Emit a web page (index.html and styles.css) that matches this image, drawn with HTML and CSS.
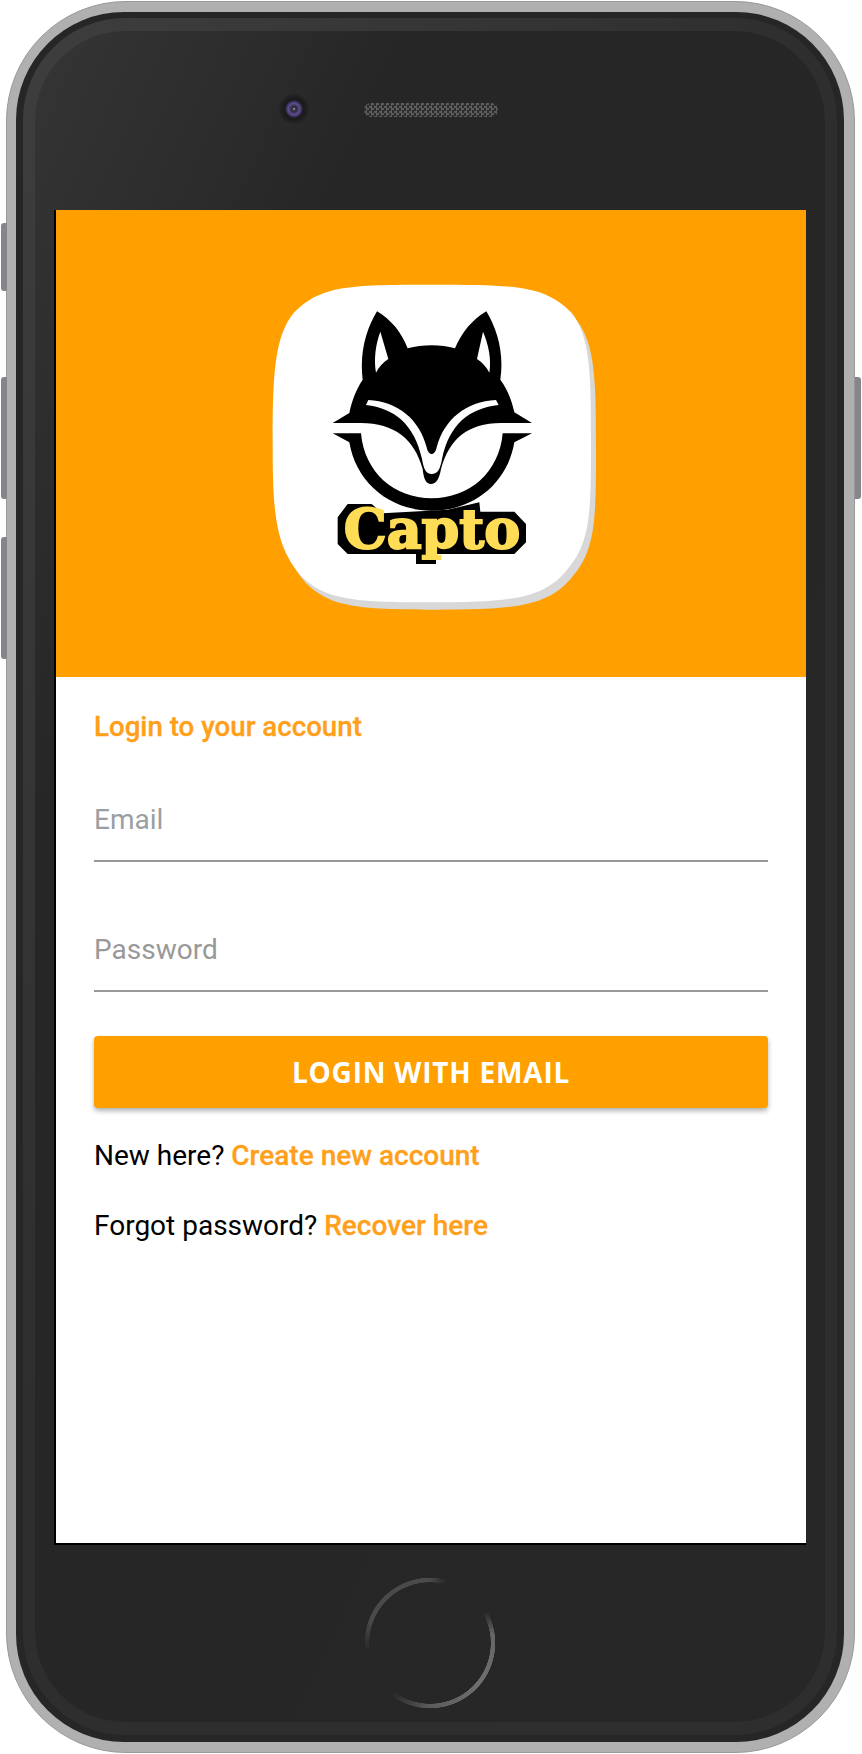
FILE: index.html
```html
<!DOCTYPE html>
<html lang="en">
<head>
  <meta charset="UTF-8">
  <title>Capto login</title>
  <link rel="stylesheet" href="styles.css">
</head>

<body>
<div class="phone">
  <div class="side-btn btn-mute"></div>
  <div class="side-btn btn-vol-up"></div>
  <div class="side-btn btn-vol-down"></div>
  <div class="side-btn btn-power"></div>

  <div class="rim">
    <div class="bezel">
      <div class="face">

        <div class="face-top">
          <div class="camera"></div>
          <div class="speaker"></div>
        </div>

        <div class="screen">
          <div class="banner">
            <svg class="logo" viewBox="0 0 1080 1050" width="360" height="350">
              <!-- app icon tile -->
              <path class="tile-shadow" transform="translate(15 22)" d="M540 47C800 47 880 50 960 130C1020 200 1020 330 1020 520C1020 720 1020 820 950 900C880 990 780 1000 540 1000C300 1000 220 990 150 920C70 830 65 720 65 520C65 320 70 200 130 130C210 50 290 47 540 47Z"/>
              <path class="tile" d="M540 47C800 47 880 50 960 130C1020 200 1020 330 1020 520C1020 720 1020 820 950 900C880 990 780 1000 540 1000C300 1000 220 990 150 920C70 830 65 720 65 520C65 320 70 200 130 130C210 50 290 47 540 47Z"/>

              <!-- fox head -->
              <path class="ink" d="M378 127C420 152 452 190 470 238C515 226 570 226 612 238C632 190 664 152 706 127C738 180 760 250 748 332C770 362 782 395 790 430L843 462L750 462C650 462 595 510 570 600C565 630 555 645 540 645C525 645 518 630 515 600C490 510 430 462 330 462L245 462L295 432C303 395 315 362 335 332C325 250 346 180 378 127Z"/>
              <path class="tile" d="M388 188L412 270C396 280 384 294 375 311C368 270 374 225 388 188Z"/>
              <path class="tile" d="M696 188L678 270C694 280 706 294 715 311C722 270 712 225 696 188Z"/>
              <path class="tile" d="M352 393C440 398 505 450 527 535C532 562 552 562 557 535C580 450 645 398 735 393L743 408C655 418 595 465 573 570C568 600 560 615 542 615C525 615 518 600 513 570C490 465 430 418 345 408Z"/>
              <!-- lower ring -->
              <path class="ink" d="M245 493L330 493C340 610 430 688 542 688C655 688 745 610 755 493L843 493L790 520C770 640 670 725 542 725C415 725 315 640 295 520Z"/>

              <!-- wordmark -->
              <path class="ink" d="M260 745L290 705L362 705L395 733L590 722L685 700L688 728L790 728L825 765L825 820L790 855L555 855L555 885L495 885L495 855L290 855L260 825Z"/>
              <text class="wordmark" x="278" y="836" textLength="530" lengthAdjust="spacingAndGlyphs">Capto</text>
            </svg>
          </div>

          <form class="login">
            <h2 class="login-title">Login to your account</h2>
            <div class="field first"><input class="email" type="text" placeholder="Email"></div>
            <div class="field"><input type="password" placeholder="Password"></div>
            <button class="btn-login" type="button">LOGIN WITH EMAIL</button>
            <p class="hint">New here? <a href="#">Create new account</a></p>
            <p class="hint">Forgot password? <a href="#">Recover here</a></p>
          </form>
        </div>

        <div class="face-bottom">
          <div class="home"></div>
        </div>

      </div>
    </div>
  </div>
</div>
</body>
</html>
```

FILE: styles.css
```css
html, body {
  margin: 0;
  padding: 0;
  background: #fff;
  overflow: hidden;
}

/* phone shell */
.phone {
  position: relative;
  box-sizing: border-box;
  width: 849px;
  height: 1752px;
  margin: 1px 0 0 6px;
  padding: 10px 10px 10px 9px;
  border: 1px solid #999;
  border-radius: 120px;
  background: #b0b0b0;
}

.rim {
  height: 100%;
  box-sizing: border-box;
  padding: 6px 7px 7px 7px;
  border-radius: 108px;
  background: #262626;
}

.bezel {
  height: 100%;
  box-sizing: border-box;
  padding: 13px 12px;
  border-radius: 102px;
  background: linear-gradient(120deg, #3e3e3e 0, #2e2e2e 45%, #2e2e2e 100%);
}

.face {
  height: 100%;
  border-radius: 90px;
  background: linear-gradient(115deg, #353535 0, #262626 24%, #272727 100%);
}

.side-btn {
  position: absolute;
  width: 6px;
  background: #85858c;
  border-radius: 3px 0 0 3px;
}

.btn-mute { left: -6px; top: 221px; height: 68px; }
.btn-vol-up { left: -6px; top: 375px; height: 122px; }
.btn-vol-down { left: -6px; top: 535px; height: 122px; }

.btn-power {
  right: -7px;
  top: 375px;
  height: 122px;
  border-radius: 0 3px 3px 0;
}

/* top of the phone */
.face-top {
  box-sizing: border-box;
  height: 179px;
  padding: 63px 0 0 244px;
  display: flex;
  align-items: flex-start;
  gap: 55px;
}

.camera {
  flex: none;
  width: 30px;
  height: 30px;
  border-radius: 50%;
  background: radial-gradient(circle at 50% 50%, #c0bcc8 0, #3a3548 1.5px, #332e40 3px, #5d4e8f 5.5px, #3d3360 7.5px, #1a1a1c 9px, #1c1c1c 11px, #262626 15px);
}

.speaker {
  flex: none;
  width: 134px;
  height: 14px;
  margin-top: 9px;
  border-radius: 7px;
  background: repeating-conic-gradient(#5c5c5c 0 25%, #2c2c2c 0 50%) 0 0 / 5px 5px;
}

/* screen */
.screen {
  box-sizing: border-box;
  width: 752px;
  height: 1335px;
  margin-left: 19px;
  border-left: 2px solid #000;
  border-bottom: 2px solid #000;
  background: #fff;
}

.banner {
  height: 467px;
  display: flex;
  align-items: center;
  justify-content: center;
  background: #ff9f00;
}

.logo {
  display: block;
}

.tile { fill: #fff; }
.tile-shadow { fill: #d8d8d8; }
.ink { fill: #000; }

.wordmark {
  font-family: "DejaVu Serif", serif;
  font-weight: 700;
  font-size: 160px;
  fill: #ffdc55;
  stroke: #ffdc55;
  stroke-width: 6px;
}

/* form */
.login {
  padding: 0 38px;
  font-family: Roboto, sans-serif;
}

.login-title {
  margin: 0;
  padding-top: 31px;
  font-size: 27.7px;
  line-height: 38px;
  font-weight: 500;
  color: #ff9f1a;
  -webkit-text-stroke: 0.3px #ff9f1a;
}

.field {
  height: 58px;
  margin-top: 70px;
  border-bottom: 2px solid #999;
}

.field.first {
  margin-top: 56px;
}

.field input {
  box-sizing: border-box;
  display: block;
  width: 100%;
  height: 100%;
  border: 0;
  padding: 0 0 23px 0;
  outline: 0;
  font-family: Roboto, sans-serif;
  font-size: 28px;
  background: transparent;
}

.field input::placeholder {
  color: #999;
  opacity: 1;
}

.field input.email::placeholder {
  color: #999fa3;
}

.btn-login {
  display: block;
  width: 100%;
  height: 72px;
  margin-top: 44px;
  padding: 0;
  border: 0;
  border-radius: 4px;
  background: #ff9f00;
  box-shadow: 0 3px 5px rgba(0,0,0,0.3);
  color: #fff;
  font-family: "Open Sans", sans-serif;
  font-size: 28px;
  font-weight: 700;
  letter-spacing: 0.8px;
}

.hint {
  margin: 38px 0 0 0;
  font-size: 28px;
  line-height: 32px;
  color: #000;
}

.btn-login + .hint {
  margin-top: 32px;
}

.hint a {
  color: #ff9f1a;
  font-weight: 500;
  text-decoration: none;
  -webkit-text-stroke: 0.3px #ff9f1a;
}

/* home button */
.face-bottom {
  box-sizing: border-box;
  height: 177px;
  padding-top: 32px;
  display: flex;
  justify-content: center;
}

.home {
  width: 132px;
  height: 132px;
  border-radius: 50%;
  background: conic-gradient(#4a4a4a 0deg, rgba(74,74,74,0) 15deg, rgba(100,100,100,0) 60deg, #666 82deg, #6e6e6e 130deg, #5c5c5c 180deg, rgba(92,92,92,0) 218deg, rgba(74,74,74,0) 262deg, #4a4a4a 290deg, #4a4a4a 360deg);
  -webkit-mask: radial-gradient(circle, transparent 60.5px, #000 61px, #000 65px, transparent 65.5px);
  mask: radial-gradient(circle, transparent 60.5px, #000 61px, #000 65px, transparent 65.5px);
}
```
